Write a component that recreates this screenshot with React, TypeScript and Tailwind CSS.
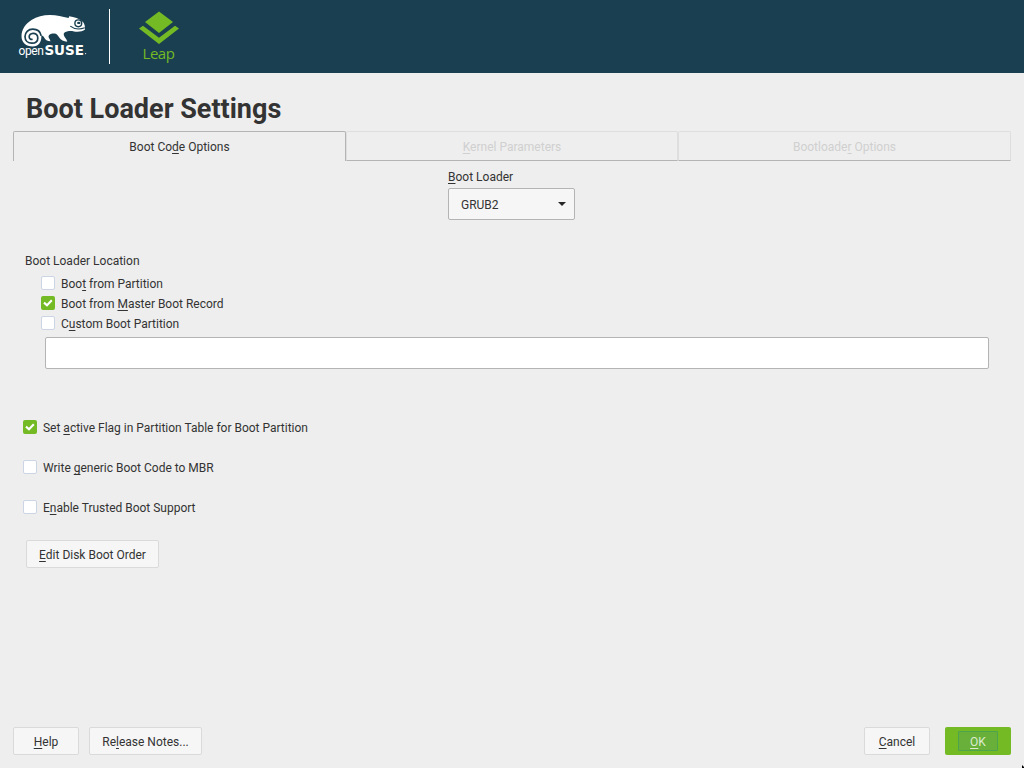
import type { ReactNode } from 'react';

/** Renders a label whose mnemonic letter is preceded by "&". */
function Mnemonic({ text }: { text: string }) {
  const i = text.indexOf('&');
  if (i < 0) return <span className="whitespace-pre">{text}</span>;
  return (
    <span className="whitespace-pre">
      {text.slice(0, i)}
      <span className="underline decoration-1 underline-offset-2 [text-decoration-skip-ink:none]">{text[i + 1]}</span>
      {text.slice(i + 2)}
    </span>
  );
}

function Check({ label, checked = false }: { label: string; checked?: boolean }) {
  return (
    <label className="flex h-5 items-start">
      <span
        className={
          checked
            ? 'mt-[3px] flex size-3.5 items-center justify-center rounded-[2px] bg-[#73ba25]'
            : 'mt-[3px] size-3.5 rounded-[2px] border border-[#ccd5e6] bg-white'
        }
      >
        {checked && (
          <svg width="14" height="14" viewBox="0 0 14 14" fill="none">
            <path d="M3 6.6 L6 9.3 L10.8 4.2" stroke="#fff" strokeWidth="2.1" />
          </svg>
        )}
      </span>
      <span className="ml-1.5 leading-[22px] tracking-[-0.01px]">
        <Mnemonic text={label} />
      </span>
    </label>
  );
}

function Button({ children, className }: { children: ReactNode; className: string }) {
  return (
    <button
      className={`flex h-7 items-center justify-center rounded-[2px] border border-[#dadada] bg-[#f6f6f6] pt-0.5 ${className}`}
    >
      {children}
    </button>
  );
}

function OpenSuseLogo() {
  return (
    <svg width="72" height="50" viewBox="18 12 72 50" className="shrink-0">
      <path
        fill="#fff"
        d="M21.5 36.5 C21.4 29 26 23.5 31.5 20 C37 16.5 43 15 50 15 C57 15 62 16.6 68.6 18 L69.2 16.3 C74 16.8 79.5 18.8 83.2 22.2 C84.6 24 85.2 26.5 85 29.5 C82.5 31.6 78 32.2 74 31.4 C71 30.8 69.5 31 67 31.4 C64.5 31.7 63.4 33 63.8 35 C64.2 37.2 66.5 38.4 67.3 41.8 C63.5 41.4 61 40.2 59.2 37.6 C57.8 35.3 56.8 33.6 54.3 33.5 C51.6 33.5 49.3 34 48.6 36 C48.2 37.8 49.8 38.6 50.5 41.2 C47.2 41.2 45.3 39.8 44 37.2 C43.2 35.7 42.4 35.6 41.3 35.7 C41.9 41.8 38.5 46.5 32.7 46.5 C26 46.5 21.6 42.5 21.5 36.5 Z"
      />
      <path
        fill="none"
        stroke="#1a3f50"
        strokeWidth="1.7"
        d="M41.2 35.9 C40.4 31.7 37 29.2 32.8 29.2 C28.2 29.2 25 32.4 25 36.5 C25 40.6 28 43.2 31.8 43.2 C35.5 43.2 37.8 41 37.8 37.9 C37.8 35 35.6 33.2 33 33.3 C30.7 33.4 29.1 35 29.2 37 C29.3 38.8 30.7 39.7 32.6 39.2"
      />
      <circle cx="78.3" cy="23.3" r="3.4" fill="#fff" stroke="#1a3f50" strokeWidth="1.4" />
      <ellipse cx="78.8" cy="22.9" rx="1.7" ry="1.2" fill="#1a3f50" />
      <path d="M70.3 26.1 C74 29 79.5 29.7 84.8 27.8" fill="none" stroke="#1a3f50" strokeWidth="1.2" />
      <text x="18.4" y="54.7" fill="#fff" className="font-[Roboto,sans-serif] text-[12px] tracking-[-0.35px]">
        open
      </text>
      <text x="44.4" y="54.7" fill="#fff" className="font-['DejaVu_Sans',sans-serif] text-[13.5px] font-bold">
        SUSE
      </text>
      <circle cx="85.6" cy="53.6" r=".6" fill="#fff" />
    </svg>
  );
}

function Header() {
  return (
    <header className="flex h-[73px] shrink-0 bg-[#1a3f50]">
      <div className="ml-[18px] w-[72px] pt-3">
        <OpenSuseLogo />
      </div>
      <div className="ml-[19px] mt-[9px] h-[55px] w-px bg-white" />
      <div className="ml-[29px] mt-[11px] flex w-10 flex-col items-center">
        <svg width="40" height="33" viewBox="0 0 40 33" fill="#73ba25" className="shrink-0">
          <path d="M20 .5 L34 11 L20 22 L6 11 Z" />
          <path d="M0 17.5 L4 14.7 L20 26.8 L36 14.7 L40 17.5 L20 33 Z" />
        </svg>
        <span className="-ml-px font-['Open_Sans',sans-serif] text-[15px] leading-[18px] tracking-[-0.5px] text-[#73ba25]">Leap</span>
      </div>
    </header>
  );
}

export default function App() {
  return (
    <div className="relative flex h-[768px] w-[1024px] flex-col overflow-hidden bg-[#eeeeee] font-[Roboto,sans-serif] text-[12px] text-[#333333]">
      <Header />
      <h1 className="ml-[26px] mt-5 h-[38px] text-[27px] font-bold leading-[32px]">Boot Loader Settings</h1>

      <div className="mx-[13px] flex h-[30px] shrink-0 leading-[30px]">
        <div className="w-[333px] rounded-t-[2px] border-x border-t border-[#b4b4b4] text-center">
          <Mnemonic text="Boot Co&de Options" />
        </div>
        <div className="w-[332px] rounded-t-[2px] border border-[#dedede] border-b-[#b4b4b4] text-center text-[#d0d0d0]">
          <Mnemonic text="&Kernel Parameters" />
        </div>
        <div className="w-[333px] rounded-t-[2px] border border-[#dedede] border-b-[#b4b4b4] text-center text-[#d0d0d0]">
          <Mnemonic text="Bootloade&r Options" />
        </div>
      </div>

      <div className="ml-[448px] mt-[7px] h-[20px] leading-[18px]">
        <Mnemonic text="&Boot Loader" />
      </div>
      <div className="ml-[448px] flex h-8 w-[127px] shrink-0 items-center justify-between rounded-[2px] border border-[#b4b4b4] bg-[#f6f6f6] pl-3 pr-2">
        <span className="pt-px">GRUB2</span>
        <svg width="8" height="4" viewBox="0 0 8 4" fill="#262626">
          <path d="M0 0 H8 L4 4 Z" />
        </svg>
      </div>

      <div className="ml-[25px] mt-8 h-[21px] leading-[18px]">Boot Loader Location</div>
      <div className="ml-[41px] flex flex-col">
        <Check label="Boo&t from Partition" />
        <Check label="Boot from &Master Boot Record" checked />
        <Check label="C&ustom Boot Partition" />
      </div>
      <input
        className="ml-[45px] mt-1 h-8 w-[944px] shrink-0 rounded-[2px] border border-[#b4b4b4] bg-white px-2 outline-none"
        aria-label="Custom Boot Partition"
      />

      <div className="ml-[23px] mt-12 flex flex-col gap-5">
        <Check label="Set &active Flag in Partition Table for Boot Partition" checked />
        <Check label="Write &generic Boot Code to MBR" />
        <Check label="E&nable Trusted Boot Support" />
      </div>
      <Button className="ml-[26px] mt-[23px] w-[133px]">
        <Mnemonic text="&Edit Disk Boot Order" />
      </Button>

      <footer className="mx-[13px] mb-[13px] mt-auto flex">
        <Button className="w-[66px]">
          <Mnemonic text="&Help" />
        </Button>
        <Button className="ml-2.5 w-[113px]">
          <Mnemonic text="Re&lease Notes..." />
        </Button>
        <Button className="ml-auto w-[66px]">
          <Mnemonic text="&Cancel" />
        </Button>
        <button className="ml-[15px] flex h-7 w-[66px] items-center justify-center rounded-[2px] bg-[#73ba25] text-[#dcebd0]">
          <span className="flex h-5 w-10 items-center justify-center rounded-[1px] border border-[#4ea34d] bg-[#68b03a] pt-0.5">
            <Mnemonic text="&OK" />
          </span>
        </button>
      </footer>

      {/* Tip of the mouse pointer, parked in the corner */}
      <svg className="absolute bottom-0 right-0" width="2" height="3" viewBox="0 0 2 3" fill="#000">
        <path d="M0 0 L2 2 V3 H0 Z" />
      </svg>
    </div>
  );
}
